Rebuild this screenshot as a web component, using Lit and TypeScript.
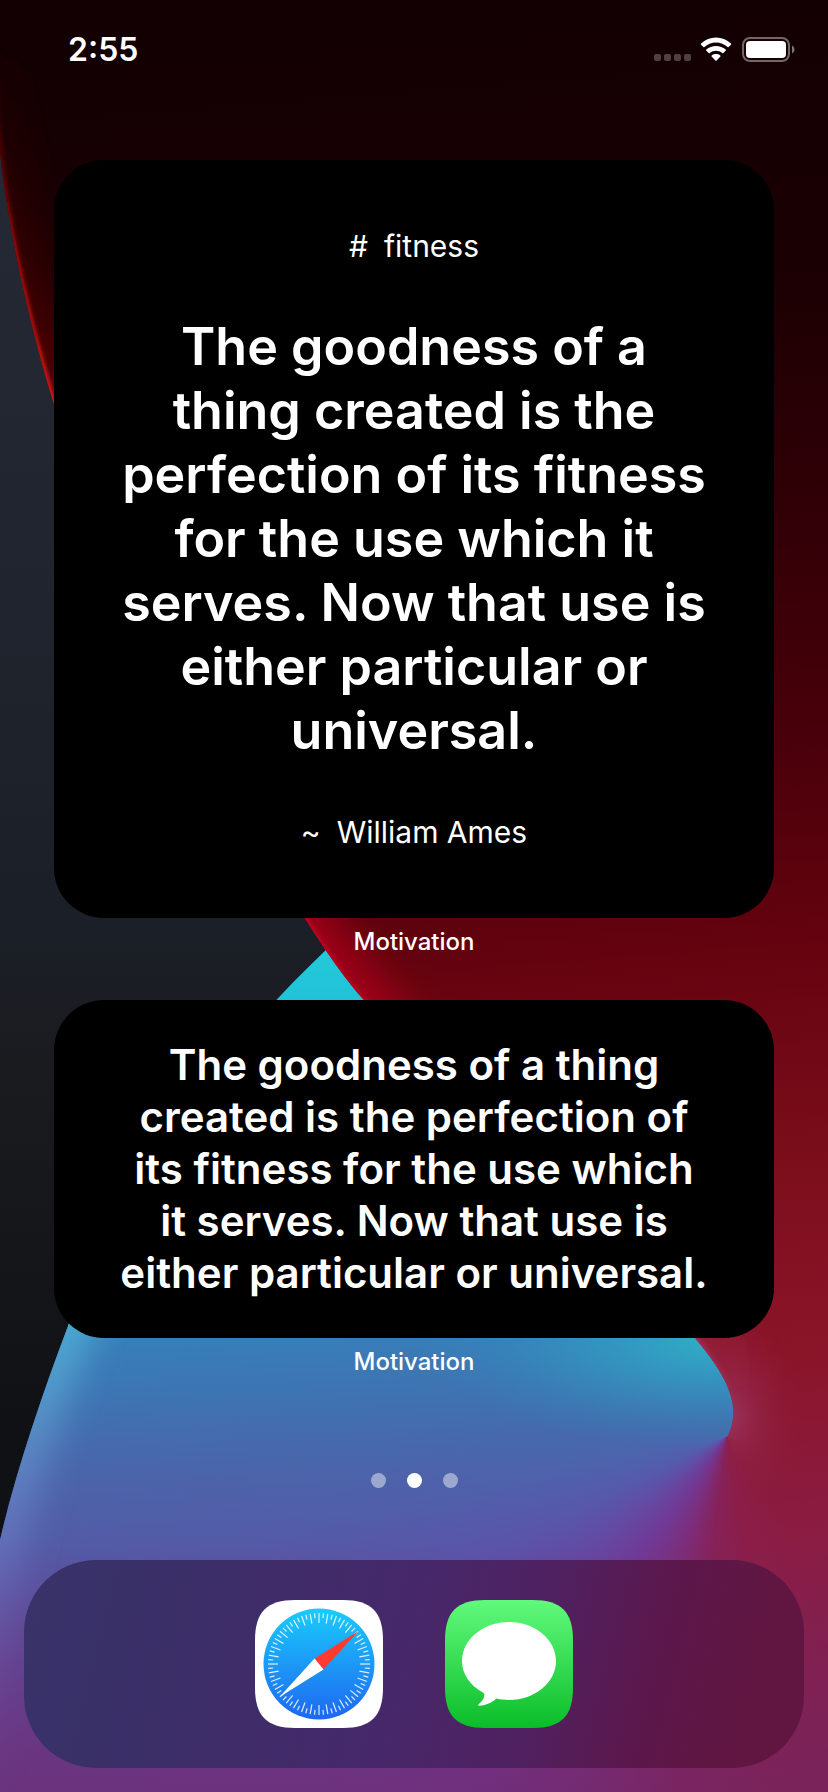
import { LitElement, html, svg, css } from "lit";
import { customElement, property, state } from "lit/decorators.js";
import { classMap } from "lit/directives/class-map.js";

const QUOTE =
  "The goodness of a thing created is the perfection of its fitness for the use which it serves. Now that use is either particular or universal.";

const RED_EDGE =
  "M-6 60C-4 180 22 300 54 405C120 610 215 780 304 917C330 958 350 985 364 1000C470 1130 600 1235 695 1338C735 1385 740 1412 727 1438";
const WAVE_EDGE = "M330 946C200 1070 110 1200 68 1326C40 1400 15 1475 0 1540C-16 1620 -30 1700 -40 1850";

@customElement("home-wallpaper")
class HomeWallpaper extends LitElement {
  static styles = css`
    :host {
      display: block;
      overflow: hidden;
    }
    .art {
      display: block;
      width: 100%;
      height: 100%;
    }
    /* Colours that sweep clockwise around the tip of the wave, starting at its right. */
    .sweep {
      width: 828px;
      height: 892px;
      background: conic-gradient(
        from 90deg at 727px 536px,
        rgba(139, 28, 62, 0) 10deg,
        rgba(139, 28, 62, 0.3) 55deg,
        rgba(139, 30, 74, 0.85) 82deg,
        rgb(134, 34, 90) 98deg,
        rgb(124, 46, 124) 112deg,
        rgba(114, 56, 150, 0.95) 126deg,
        rgba(107, 68, 162, 0.75) 140deg,
        rgba(98, 82, 178, 0.5) 153deg,
        rgba(92, 98, 186, 0.22) 168deg,
        rgba(90, 110, 190, 0) 184deg,
        rgba(90, 110, 190, 0) 300deg,
        rgba(139, 28, 62, 0) 360deg
      );
    }
  `;

  render() {
    return html`
      <svg class="art" viewBox="0 0 828 1792" preserveAspectRatio="xMidYMid slice" aria-hidden="true">
        <defs>
          <linearGradient id="slate" x1="0" y1="0" x2="0" y2="1">
            <stop offset="0" stop-color="#252a36" />
            <stop offset="0.25" stop-color="#212631" />
            <stop offset="0.5" stop-color="#1b2028" />
            <stop offset="0.6" stop-color="#1a1b1f" />
            <stop offset="0.8" stop-color="#0f1115" />
          </linearGradient>
          <linearGradient id="crimson" gradientUnits="userSpaceOnUse" x1="470" y1="0" x2="610" y2="1792">
            <stop offset="0" stop-color="#120002" />
            <stop offset="0.16" stop-color="#1a0003" />
            <stop offset="0.3" stop-color="#310006" />
            <stop offset="0.42" stop-color="#48000a" />
            <stop offset="0.54" stop-color="#65030f" />
            <stop offset="0.66" stop-color="#7c0e1b" />
            <stop offset="0.76" stop-color="#8a1428" />
            <stop offset="0.86" stop-color="#8b1c42" />
            <stop offset="1" stop-color="#7a2054" />
          </linearGradient>
          <linearGradient id="glow" x1="0" y1="0" x2="0" y2="1792" gradientUnits="userSpaceOnUse">
            <stop offset="0" stop-color="#300000" stop-opacity="0" />
            <stop offset="0.12" stop-color="#500000" stop-opacity="0.4" />
            <stop offset="0.22" stop-color="#7a000c" stop-opacity="0.7" />
            <stop offset="0.5" stop-color="#c2001e" stop-opacity="0.7" />
            <stop offset="0.6" stop-color="#c0001e" stop-opacity="0.7" />
            <stop offset="0.74" stop-color="#a02a4c" stop-opacity="0.5" />
            <stop offset="0.78" stop-color="#a03060" stop-opacity="0" />
          </linearGradient>
          <linearGradient id="edge" x1="0" y1="0" x2="0" y2="1792" gradientUnits="userSpaceOnUse">
            <stop offset="0" stop-color="#400000" stop-opacity="0" />
            <stop offset="0.08" stop-color="#7a0404" stop-opacity="0.6" />
            <stop offset="0.14" stop-color="#a80c08" />
            <stop offset="0.22" stop-color="#e8201a" />
            <stop offset="0.5" stop-color="#c80022" />
            <stop offset="0.6" stop-color="#c0001e" />
            <stop offset="0.75" stop-color="#a83a68" stop-opacity="0.8" />
            <stop offset="0.79" stop-color="#a83a68" stop-opacity="0" />
          </linearGradient>
          <radialGradient id="blush" cx="0" cy="0" r="1" gradientUnits="userSpaceOnUse" gradientTransform="translate(728 1416) scale(76 104)">
            <stop offset="0" stop-color="#a04070" stop-opacity="0.7" />
            <stop offset="0.4" stop-color="#9a3058" stop-opacity="0.4" />
            <stop offset="1" stop-color="#90203c" stop-opacity="0" />
          </radialGradient>
          <linearGradient id="wave" x1="370" y1="940" x2="400" y2="1792" gradientUnits="userSpaceOnUse">
            <stop offset="0" stop-color="#23cbdc" />
            <stop offset="0.09" stop-color="#20bfd5" />
            <stop offset="0.38" stop-color="#2f8abb" />
            <stop offset="0.49" stop-color="#3a7ab6" />
            <stop offset="0.62" stop-color="#4964a8" />
            <stop offset="0.74" stop-color="#56539f" />
            <stop offset="0.88" stop-color="#643a8a" />
            <stop offset="1" stop-color="#6e2a76" />
          </linearGradient>
          <radialGradient id="tip" cx="0" cy="0" r="1" gradientUnits="userSpaceOnUse" gradientTransform="translate(720 1340) scale(300 110)">
            <stop offset="0" stop-color="#2fb0c6" />
            <stop offset="0.5" stop-color="#30a0c4" stop-opacity="0.5" />
            <stop offset="1" stop-color="#3088bc" stop-opacity="0" />
          </radialGradient>
          <linearGradient id="rim" x1="0" y1="1000" x2="0" y2="1792" gradientUnits="userSpaceOnUse">
            <stop offset="0.1" stop-color="#50c0dc" stop-opacity="0" />
            <stop offset="0.36" stop-color="#50c4e0" />
            <stop offset="0.68" stop-color="#6c7cc4" />
            <stop offset="1" stop-color="#68489a" />
          </linearGradient>
          <linearGradient id="floor" x1="0" y1="1540" x2="0" y2="1792" gradientUnits="userSpaceOnUse">
            <stop offset="0" stop-color="#6e2868" stop-opacity="0" />
            <stop offset="1" stop-color="#6e2868" stop-opacity="0.55" />
          </linearGradient>
          <filter id="soft2" x="-10%" y="-10%" width="120%" height="120%">
            <feGaussianBlur stdDeviation="2" />
          </filter>
          <filter id="soft20" x="-40%" y="-30%" width="180%" height="160%">
            <feGaussianBlur stdDeviation="20" />
          </filter>
          <clipPath id="redClip">
            <path d="${RED_EDGE}L600 1792H828V-20H-6Z" />
          </clipPath>
          <clipPath id="waveClip">
            <path d="${WAVE_EDGE}H828V946Z" />
          </clipPath>
        </defs>

        <rect width="828" height="1792" fill="url(#slate)" />

        <g clip-path="url(#waveClip)">
          <rect y="900" width="828" height="892" fill="url(#wave)" />
          <path d=${WAVE_EDGE} fill="none" stroke="url(#rim)" stroke-width="36" filter="url(#soft20)" />
          <rect x="400" y="1230" width="428" height="240" fill="url(#tip)" />
        </g>

        <g clip-path="url(#redClip)">
          <rect width="828" height="1792" fill="url(#crimson)" />
          <path d=${RED_EDGE} fill="none" stroke="url(#glow)" stroke-width="50" filter="url(#soft20)" />
          <path d=${RED_EDGE} fill="none" stroke="url(#edge)" stroke-width="5" filter="url(#soft2)" />
          <rect x="640" y="1300" width="188" height="230" fill="url(#blush)" />
        </g>

        <g clip-path="url(#waveClip)">
          <foreignObject y="900" width="828" height="892"><div class="sweep"></div></foreignObject>
          <rect y="1540" width="828" height="252" fill="url(#floor)" />
        </g>
      </svg>
    `;
  }
}

@customElement("status-bar")
class StatusBar extends LitElement {
  static styles = css`
    :host {
      display: flex;
      align-items: center;
      justify-content: space-between;
      height: 100px;
      padding: 0 33px 0 68px;
      color: #fff;
    }
    .time {
      font-size: 32px;
      line-height: 40px;
      font-weight: 600;
    }
    .signals {
      display: flex;
      align-items: center;
      gap: 9px;
    }
    .signals svg {
      display: block;
    }
  `;

  render() {
    return html`
      <time class="time">2:55</time>
      <div class="signals">
        <svg width="37" height="26" viewBox="0 0 37 26" role="img" aria-label="No signal" fill="#fff" fill-opacity="0.25">
          ${[0, 10, 20, 30].map((x) => svg`<rect x=${x} y="17" width="7" height="7" rx="2" />`)}
        </svg>
        <svg width="32" height="26" viewBox="0 0 32 26" role="img" aria-label="Wi-Fi" fill="#fff">
          <path d="M16 5.4C20.4 5.4 24.500 7.100 27.600 10.100C27.900 10.400 28.300 10.400 28.600 10.100L31 7.700C31.300 7.400 31.300 6.900 31 6.600C26.900 2.700 21.600 .6 16 .6S5.100 2.700 1 6.600C.7 6.900 .7 7.400 1 7.700L3.400 10.100C3.700 10.400 4.100 10.400 4.400 10.100C7.500 7.100 11.600 5.400 16 5.400Z" />
          <path d="M16 13.800C18.300 13.800 20.500 14.600 22.200 16.100C22.500 16.400 23 16.400 23.300 16.100L25.700 13.700C26 13.400 26 12.900 25.700 12.600C23 10.200 19.600 8.900 16 8.900S9 10.200 6.300 12.600C6 12.900 6 13.400 6.300 13.700L8.700 16.100C9 16.400 9.500 16.400 9.800 16.100C11.500 14.600 13.700 13.800 16 13.800Z" />
          <path d="M20.400 19.600C20.700 19.300 20.700 18.800 20.300 18.500C19.100 17.600 17.600 17.100 16 17.100S12.900 17.600 11.700 18.500C11.300 18.800 11.300 19.300 11.600 19.600L15.400 23.600Q16 24.200 16.600 23.600L20.400 19.600Z" />
        </svg>
        <svg width="54" height="26" viewBox="0 0 54 26" role="img" aria-label="Battery full">
          <rect x="2" y="1" width="46" height="23" rx="7" fill="none" stroke="#fff" stroke-opacity="0.4" stroke-width="2" />
          <rect x="5" y="4" width="40" height="17" rx="4" fill="#fff" />
          <path d="M51 8.500C54.300 10 54.300 15 51 16.500Z" fill="#fff" fill-opacity="0.45" />
        </svg>
      </div>
    `;
  }
}

@customElement("quote-widget")
class QuoteWidget extends LitElement {
  @property() size: "large" | "medium" = "medium";
  @property() quote = "";
  @property() topic = "";
  @property() author = "";
  @property() name = "";

  static styles = css`
    :host {
      display: block;
    }
    .widget {
      display: flex;
      flex-direction: column;
      gap: 10px;
      margin: 0;
      text-align: center;
      color: #fff;
    }
    .card {
      display: flex;
      flex-direction: column;
      background: #000;
      border-radius: 50px;
    }
    .large {
      gap: 51px;
      padding: 68px 66px;
    }
    .medium {
      padding: 39px 66px;
    }
    .quote {
      margin: 0;
      font-weight: 600;
    }
    .large .quote {
      font-size: 52px;
      line-height: 64px;
    }
    .medium .quote {
      font-size: 42px;
      line-height: 52px;
    }
    .meta {
      display: flex;
      justify-content: center;
      gap: 16px;
      margin: 0;
      font-size: 30px;
      line-height: 36px;
    }
    .name {
      font-size: 24px;
      line-height: 28px;
      font-weight: 500;
    }
  `;

  render() {
    const meta = (mark: string, text: string) =>
      text ? html`<p class="meta"><span>${mark}</span><span>${text}</span></p>` : null;
    return html`
      <figure class="widget">
        <div class=${classMap({ card: true, [this.size]: true })}>
          ${meta("#", this.topic)}
          <blockquote class="quote">${this.quote}</blockquote>
          ${meta("~", this.author)}
        </div>
        <figcaption class="name">${this.name}</figcaption>
      </figure>
    `;
  }
}

const TILE =
  "M0 40C0 12 12 0 40 0H88C116 0 128 12 128 40V88C128 116 116 128 88 128H40C12 128 0 116 0 88Z";

@customElement("app-dock")
class AppDock extends LitElement {
  static styles = css`
    :host {
      display: block;
    }
    .dock {
      display: flex;
      justify-content: center;
      gap: 62px;
      padding: 40px;
      border-radius: 72px;
      background: linear-gradient(104deg, #38336a 0%, #3b2f68 20%, #46286a 48%, #50205f 66%, #5c174a 80%, #601640 92%);
    }
    .app {
      display: block;
      padding: 0;
      border: 0;
      background: none;
      cursor: pointer;
    }
    .app svg {
      display: block;
    }
  `;

  private ticks() {
    return Array.from({ length: 72 }, (_, i) => {
      const long = i % 2 === 0;
      return svg`<line x1="64" y1="13" x2="64" y2=${long ? 23 : 18} transform="rotate(${i * 5} 64 64)" />`;
    });
  }

  render() {
    return html`
      <nav class="dock" aria-label="Dock">
        <button class="app" aria-label="Safari">
          <svg width="128" height="128" viewBox="0 0 128 128">
            <defs>
              <linearGradient id="sky" x1="0" y1="0" x2="0" y2="1">
                <stop offset="0" stop-color="#1acbfb" />
                <stop offset="1" stop-color="#1e67f1" />
              </linearGradient>
            </defs>
            <path d=${TILE} fill="#fff" />
            <circle cx="64" cy="64" r="55.500" fill="url(#sky)" />
            <g stroke="#fff" stroke-opacity="0.85" stroke-width="1.200">${this.ticks()}</g>
            <path d="M103.500 31L59.500 58.500L68.500 69.500Z" fill="#ff3b30" />
            <path d="M24.500 97L59.500 58.500L68.500 69.500Z" fill="#fff" />
          </svg>
        </button>
        <button class="app" aria-label="Messages">
          <svg width="128" height="128" viewBox="0 0 128 128">
            <defs>
              <linearGradient id="leaf" x1="0" y1="0" x2="0" y2="1">
                <stop offset="0" stop-color="#61fa7c" />
                <stop offset="1" stop-color="#0bbd29" />
              </linearGradient>
            </defs>
            <path d=${TILE} fill="url(#leaf)" />
            <path
              d="M64 22C90 22 111 39.500 111 61C111 82.500 90 100 64 100C59.500 100 55.500 99.600 51.500 98.600C47 102.500 41 105.500 34.500 105.800C33 105.800 32.800 104.900 33.800 104C37 101.200 39.500 98 39.400 94.500C39.300 93.500 38.700 93 37.800 92.400C25 85.500 17 74 17 61C17 39.500 38 22 64 22Z"
              fill="#fff"
            />
          </svg>
        </button>
      </nav>
    `;
  }
}

@customElement("app-root")
class AppRoot extends LitElement {
  @state() private page = 1;

  static styles = css`
    :host {
      display: grid;
      min-height: 100vh;
      font-family: Inter, "Liberation Sans", sans-serif;
      background: #120002;
    }
    .wallpaper,
    .screen {
      grid-area: 1 / 1;
      min-width: 0;
    }
    .wallpaper {
      height: 0;
      min-height: 100%;
    }
    .screen {
      display: flex;
      flex-direction: column;
      z-index: 1;
    }
    .widgets {
      display: flex;
      flex-direction: column;
      gap: 44px;
      padding: 60px 54px 0;
    }
    .pages {
      display: flex;
      flex: 1;
      align-items: center;
      justify-content: center;
      gap: 21px;
      padding-top: 24px;
    }
    .dot {
      width: 15px;
      height: 15px;
      padding: 0;
      border: 0;
      border-radius: 50%;
      background: rgba(255, 255, 255, 0.45);
      cursor: pointer;
    }
    .current {
      background: #fff;
    }
    .dock {
      margin: 0 24px 24px;
    }
  `;

  render() {
    return html`
      <home-wallpaper class="wallpaper"></home-wallpaper>
      <div class="screen">
        <status-bar></status-bar>
        <main class="widgets">
          <quote-widget size="large" topic="fitness" author="William Ames" name="Motivation" .quote=${QUOTE}></quote-widget>
          <quote-widget size="medium" name="Motivation" .quote=${QUOTE}></quote-widget>
        </main>
        <nav class="pages" aria-label="Pages">
          ${[0, 1, 2].map(
            (i) => html`<button
              class=${classMap({ dot: true, current: i === this.page })}
              aria-label="Page ${i + 1}"
              @click=${() => (this.page = i)}
            ></button>`
          )}
        </nav>
        <app-dock class="dock"></app-dock>
      </div>
    `;
  }
}
